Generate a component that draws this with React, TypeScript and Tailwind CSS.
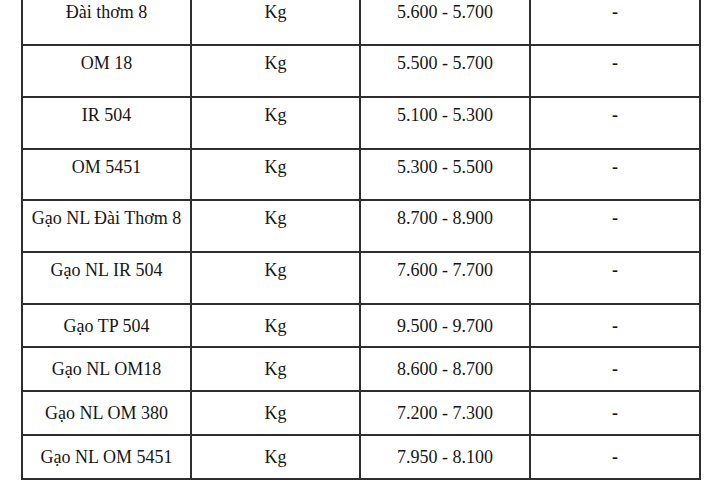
const rows = [
  { name: 'Đài thơm 8', price: '5.600 - 5.700', h: 'h-[46px]', pad: 'pt-[2px]' },
  { name: 'OM 18', price: '5.500 - 5.700', h: 'h-[52px]', pad: 'pt-[7px]' },
  { name: 'IR 504', price: '5.100 - 5.300', h: 'h-[52px]', pad: 'pt-[7px]' },
  { name: 'OM 5451', price: '5.300 - 5.500', h: 'h-[51px]', pad: 'pt-[7px]' },
  { name: 'Gạo NL Đài Thơm 8', price: '8.700 - 8.900', h: 'h-[52px]', pad: 'pt-[7px]' },
  { name: 'Gạo NL IR 504', price: '7.600 - 7.700', h: 'h-[52px]', pad: 'pt-[7px]' },
  { name: 'Gạo TP 504', price: '9.500 - 9.700', h: 'h-[43px]', pad: 'pt-[11px]' },
  { name: 'Gạo NL OM18', price: '8.600 - 8.700', h: 'h-[44px]', pad: 'pt-[11px]' },
  { name: 'Gạo NL OM 380', price: '7.200 - 7.300', h: 'h-[44px]', pad: 'pt-[11px]' },
  { name: 'Gạo NL OM 5451', price: '7.950 - 8.100', h: 'h-[44px]', pad: 'pt-[11px]' },
]

export default function App() {
  return (
    <div
      className="w-[720px] h-[480px] overflow-hidden bg-white text-[#161616] text-[18px] leading-[20px]"
      style={{ fontFamily: '"Liberation Serif", "Times New Roman", serif' }}
    >
      <div className="ml-[21px] w-[680px] border-x-2 border-[#2e2e2e]">
        {rows.map((r) => (
          <div
            key={r.name}
            className={`grid grid-cols-[169px_169px_170px_168px] border-b-2 border-[#2e2e2e] ${r.h}`}
          >
            <div className={`border-r-2 border-[#2e2e2e] text-center whitespace-nowrap ${r.pad}`}>{r.name}</div>
            <div className={`border-r-2 border-[#2e2e2e] text-center ${r.pad}`}>Kg</div>
            <div className={`border-r-2 border-[#2e2e2e] text-center ${r.pad}`}>{r.price}</div>
            <div className={`text-center font-bold ${r.pad}`}>-</div>
          </div>
        ))}
      </div>
    </div>
  )
}
